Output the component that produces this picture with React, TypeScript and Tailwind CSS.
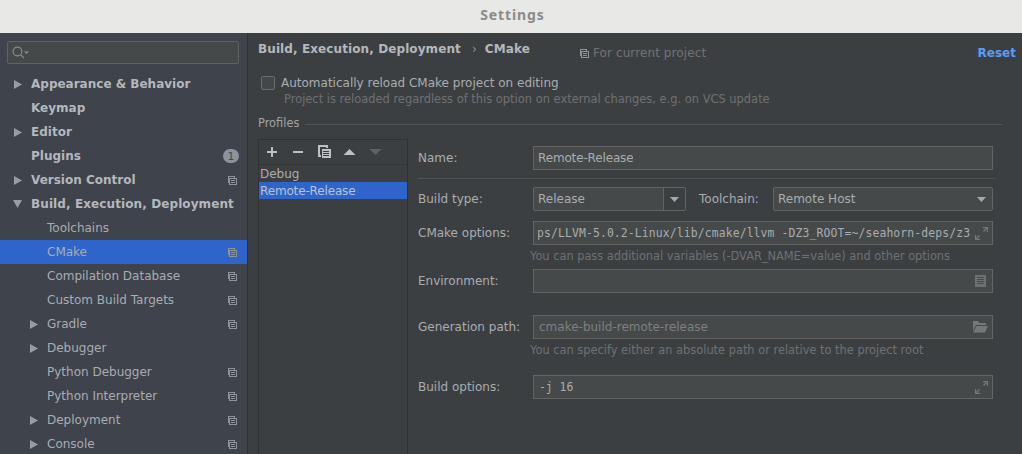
import React from "react";

const sans = "font-['DejaVu_Sans',sans-serif]";

function CopyIcon({ className = "" }: { className?: string }) {
  return (
    <svg width="9" height="9" viewBox="0 0 9 9" className={className} fill="none" stroke="#8f9499" strokeWidth="1" shapeRendering="crispEdges">
      <path d="M1.5 6.5H0.5V0.5H6.5V1.5" />
      <rect x="1.5" y="2.5" width="7" height="6" />
      <path d="M3 4.5H7M3 6.5H7" />
    </svg>
  );
}

function Arrow({ open }: { open?: boolean }) {
  return open ? (
    <svg width="9" height="8" viewBox="0 0 9 8" className="-ml-px"><path d="M0 0H9L4.5 8Z" fill="#9a9da0" /></svg>
  ) : (
    <svg width="8" height="9" viewBox="0 0 8 9"><path d="M0 0L8 4.5L0 9Z" fill="#9a9da0" /></svg>
  );
}

function ExpandIcon() {
  return (
    <svg width="13" height="13" viewBox="0 0 13 13" fill="none" stroke="#74787b" strokeWidth="1.2">
      <path d="M8 0.6H12.4V5" />
      <path d="M12 1L8.5 4.5" />
      <path d="M0.6 8V12.4H5" />
      <path d="M1 12L4.5 8.5" />
    </svg>
  );
}

function Caret() {
  return <svg width="9" height="5" viewBox="0 0 9 5"><path d="M0 0H9L4.5 5Z" fill="#a6a8aa" /></svg>;
}

type Item = { label: string; level: 0 | 1; arrow?: "closed" | "open"; copy?: boolean; badge?: string; selected?: boolean };

const items: Item[] = [
  { label: "Appearance & Behavior", level: 0, arrow: "closed" },
  { label: "Keymap", level: 0 },
  { label: "Editor", level: 0, arrow: "closed" },
  { label: "Plugins", level: 0, badge: "1" },
  { label: "Version Control", level: 0, arrow: "closed", copy: true },
  { label: "Build, Execution, Deployment", level: 0, arrow: "open" },
  { label: "Toolchains", level: 1 },
  { label: "CMake", level: 1, copy: true, selected: true },
  { label: "Compilation Database", level: 1, copy: true },
  { label: "Custom Build Targets", level: 1, copy: true },
  { label: "Gradle", level: 1, arrow: "closed", copy: true },
  { label: "Debugger", level: 1, arrow: "closed" },
  { label: "Python Debugger", level: 1, copy: true },
  { label: "Python Interpreter", level: 1, copy: true },
  { label: "Deployment", level: 1, arrow: "closed", copy: true },
  { label: "Console", level: 1, arrow: "closed", copy: true },
];

function SideRow({ item }: { item: Item }) {
  const arrowBox = item.level === 0 ? "ml-[14px] w-[17px]" : "ml-[30px] w-[17px]";
  return (
    <div className={`flex h-6 shrink-0 items-center pr-[10px] ${item.selected ? "bg-[#2f65ca]" : ""}`}>
      <span className={`flex shrink-0 items-center ${arrowBox}`}>
        {item.arrow && <Arrow open={item.arrow === "open"} />}
      </span>
      <span
        className={`flex-1 whitespace-nowrap ${item.level === 0 ? "font-bold text-[#b4b8bb]" : "text-[#a9adb0]"} ${
          item.arrow === "open" ? "tracking-[0.1px]" : ""
        }`}
      >
        {item.label}
      </span>
      {item.copy && <CopyIcon className="shrink-0" />}
      {item.badge && (
        <span className="-mr-[2px] flex h-[14px] w-4 items-center justify-center rounded-full bg-[#8c939b] text-[10px] text-[#3e434c]">{item.badge}</span>
      )}
    </div>
  );
}

function Field({ children, right, className = "" }: { children?: React.ReactNode; right?: React.ReactNode; className?: string }) {
  return (
    <div className={`flex h-6 items-center justify-between border border-[#646464] bg-[#45494a] pl-1 pr-1 ${className}`}>
      <span className="min-w-0 overflow-hidden whitespace-nowrap">{children}</span>
      {right}
    </div>
  );
}

function FormRow({ label, children, className = "" }: { label: string; children: React.ReactNode; className?: string }) {
  return (
    <div className={`flex items-center ${className}`}>
      <span className="w-[115px] shrink-0 text-[#a9adb0]">{label}</span>
      <div className="w-[460px] shrink-0">{children}</div>
    </div>
  );
}

export default function App() {
  return (
    <div className={`flex h-[454px] w-[1022px] flex-col overflow-hidden bg-[#3c3f41] text-[12px] ${sans}`}>
      <div className="flex h-[33px] shrink-0 items-center justify-center bg-[#e8e8e7] pb-[5px] pl-[3px] text-[14px] font-bold tracking-[0.9px] text-[#8b8b8b] font-['Noto_Sans',sans-serif]">
        Settings
      </div>
      <div className="flex min-h-0 flex-1">
        {/* left nav */}
        <aside className="flex w-[248px] shrink-0 flex-col overflow-hidden border-r border-[#323232] bg-[#3e434c]">
          <div className="mx-[7px] mt-2 flex h-[23px] w-[232px] shrink-0 items-center rounded-[2px] border border-[#5f6263] bg-[#45494a] pl-1">
            <svg width="17" height="13" viewBox="0 0 17 13" fill="none" stroke="#8b8f93" strokeWidth="1.1">
              <circle cx="5.5" cy="5.5" r="4.4" />
              <path d="M8.8 8.8L12 12" />
              <path d="M12 5.5H17L14.5 8Z" fill="#8b8f93" stroke="none" />
            </svg>
          </div>
          <div className="mt-2 flex flex-col">
            {items.map((item) => (
              <SideRow key={item.label} item={item} />
            ))}
          </div>
        </aside>

        {/* right content */}
        <main className="flex min-w-0 flex-1 flex-col pl-[10px]">
          <div className="flex h-[31px] shrink-0 items-center pr-[6px]">
            <span className="w-[322px] whitespace-nowrap font-bold tracking-[0.1px] text-[#b4b8bb]">
              Build, Execution, Deployment<span className="ml-[11px] mr-2 font-normal text-[#8f9396]">›</span>CMake
            </span>
            <span className="flex flex-1 items-center gap-1 pt-[9px] text-[#6f7376]">
              <CopyIcon />
              <span className="tracking-[0.1px]">For current project</span>
            </span>
            <span className="pt-[9px] font-bold text-[#589df6]">Reset</span>
          </div>

          <div className="mt-[10px] flex h-[18px] items-center pl-[3px] text-[#a9adb0]">
            <span className="mr-[6px] h-[14px] w-[14px] rounded-[2px] border border-[#6b6b6b] bg-[#43474a]" />
            Automatically reload CMake project on editing
          </div>
          <div className="-mt-px pl-[26px] text-[11.45px] leading-[16px] text-[#6e7174]">
            Project is reloaded regardless of this option on external changes, e.g. on VCS update
          </div>

          <div className="mt-[9px] flex h-[16px] items-center gap-[6px] pr-[19px] text-[11.4px] text-[#a0a4a7]">
            Profiles
            <span className="h-px flex-1 bg-[#515151]" />
          </div>

          <div className="mt-[7px] flex min-h-0 flex-1">
            {/* profiles list */}
            <div className="flex w-[150px] shrink-0 flex-col border border-b-0 border-[#2f3133]">
              <div className="flex h-[25px] shrink-0 items-center border-b border-[#333537] pl-[7px]">
                <svg width="12" height="12" viewBox="0 0 12 12"><path d="M5 1h2v4h4v2H7v4H5V7H1V5h4z" fill="#bfc2c4" /></svg>
                <svg width="14" height="12" viewBox="0 0 14 12" className="ml-[14px]"><path d="M1 5h10v2H1z" fill="#bfc2c4" /></svg>
                <svg width="14" height="14" viewBox="0 0 14 14" className="ml-3" fill="none" stroke="#bfc2c4" strokeWidth="1.2" shapeRendering="crispEdges">
                  <path d="M3 11H1V1H9V3" />
                  <rect x="3.5" y="3.5" width="9" height="9.5" fill="#bfc2c4" stroke="none" />
                  <path d="M5 6H11M5 8H11M5 10H11" stroke="#3c3f41" strokeWidth="1" />
                </svg>
                <svg width="14" height="8" viewBox="0 0 14 8" className="ml-[11px]"><path d="M0.5 7L6.5 1L12.5 7Z" fill="#bfc2c4" /></svg>
                <svg width="14" height="8" viewBox="0 0 14 8" className="ml-3"><path d="M0.5 1H12.5L6.5 7Z" fill="#5f6264" /></svg>
              </div>
              <div className="flex h-[17px] items-center pl-px text-[#a9adb0]">Debug</div>
              <div className="flex h-[17px] items-center bg-[#2f65ca] pl-px tracking-[-0.15px] text-[#b9c3d2]">Remote-Release</div>
            </div>

            {/* form */}
            <div className="ml-[10px] flex min-w-0 flex-1 flex-col">
              <FormRow label="Name:" className="mt-[7px]">
                <Field><span className="tracking-[-0.15px] text-[#a9adb0]">Remote-Release</span></Field>
              </FormRow>
              <div className="mt-2 h-px w-[578px] bg-[#515151]" />
              <FormRow label="Build type:" className="mt-2">
                <div className="flex items-center">
                  <div className="flex h-6 w-[153px] items-center overflow-hidden rounded-[2px] border border-[#646464] bg-[#45494a] pl-1 text-[#a9adb0]">
                    <span className="flex-1">Release</span>
                    <span className="flex h-full w-[22px] items-center justify-center border-l border-[#646464] bg-[#3c3f41]"><Caret /></span>
                  </div>
                  <span className="ml-[13px] w-[74px] shrink-0 whitespace-nowrap text-[#a9adb0]">Toolchain:</span>
                  <div className="flex h-6 w-[220px] items-center justify-between rounded-[2px] border border-[#646464] bg-[#45494a] pl-1 pr-[6px] text-[#a9adb0]">
                    Remote Host
                    <Caret />
                  </div>
                </div>
              </FormRow>
              <FormRow label="CMake options:" className="mt-[10px]">
                <Field right={<span className="ml-1 flex shrink-0"><ExpandIcon /></span>}>
                  <span className="-ml-px inline-block font-['DejaVu_Sans_Mono',monospace] text-[11.4px] tracking-[0.13px] text-[#a9adb0]">ps/LLVM-5.0.2-Linux/lib/cmake/llvm -DZ3_ROOT=~/seahorn-deps/z3</span>
                </Field>
              </FormRow>
              <div className="ml-[112px] mt-[2px] h-[18px] whitespace-nowrap text-[11.4px] leading-[18px] tracking-[-0.02px] text-[#6e7174]">
                You can pass additional variables (-DVAR_NAME=value) and other options
              </div>
              <FormRow label="Environment:" className="mt-1">
                <Field
                  right={
                    <svg width="11" height="12" viewBox="0 0 11 12" className="mr-[2px]">
                      <rect x="0" y="0" width="11" height="12" fill="#6e7174" />
                      <path d="M2 2.5H9M2 4.5H9M2 6.5H9M2 8.5H9" stroke="#45494a" strokeWidth="1" />
                    </svg>
                  }
                />
              </FormRow>
              <FormRow label="Generation path:" className="mt-[22px]">
                <Field
                  right={
                    <svg width="16" height="12" viewBox="0 0 16 12">
                      <path d="M1 0H6L7.5 2H14V4H4L1 10Z" fill="#74787b" />
                      <path d="M4.5 5H16L13 11.5H1Z" fill="#74787b" />
                    </svg>
                  }
                >
                  <span className="pl-px text-[#7c8083]">cmake-build-remote-release</span>
                </Field>
              </FormRow>
              <div className="ml-[112px] mt-[2px] h-[18px] whitespace-nowrap text-[11.4px] leading-[18px] text-[#6e7174]">
                You can specify either an absolute path or relative to the project root
              </div>
              <FormRow label="Build options:" className="mt-[16px]">
                <Field right={<span className="ml-1 flex shrink-0"><ExpandIcon /></span>}>
                  <span className="pl-px font-['DejaVu_Sans_Mono',monospace] text-[11.4px] text-[#a9adb0]">-j 16</span>
                </Field>
              </FormRow>
            </div>
          </div>
        </main>
      </div>
    </div>
  );
}
